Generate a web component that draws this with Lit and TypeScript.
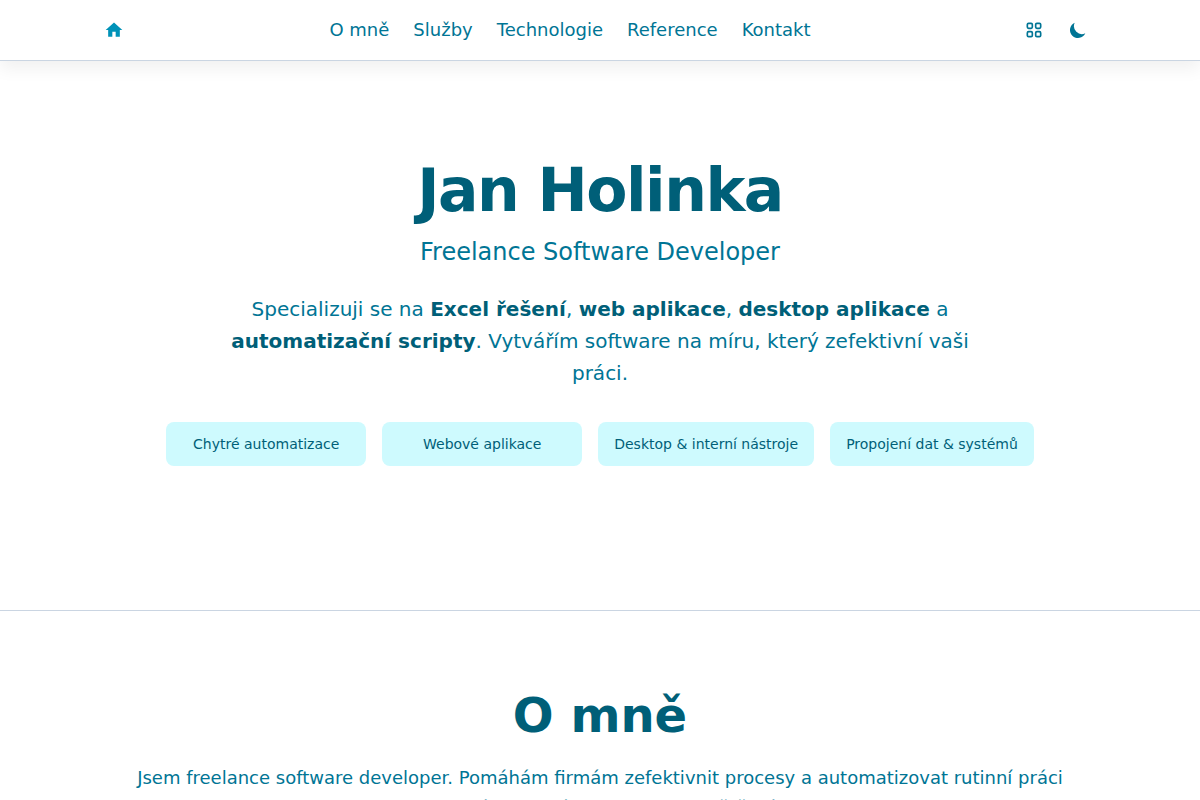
import { LitElement, html, css } from 'lit';
import { customElement } from 'lit/decorators.js';

const NAV = [
  { id: 'o-mne', label: 'O mně' },
  { id: 'sluzby', label: 'Služby' },
  { id: 'technologie', label: 'Technologie' },
  { id: 'reference', label: 'Reference' },
  { id: 'kontakt', label: 'Kontakt' },
];

const TAGS = [
  'Chytré automatizace',
  'Webové aplikace',
  'Desktop & interní nástroje',
  'Propojení dat & systémů',
];

@customElement('app-root')
export class AppRoot extends LitElement {
  static styles = css`
    :host {
      display: block;
      min-height: 100vh;
      font-family: 'DejaVu Sans', sans-serif;
      font-size: 18px;
      line-height: 28px;
      color: #007595;
      background: #fff;
    }
    * { box-sizing: border-box; }
    .header {
      position: sticky;
      top: 0;
      z-index: 1;
      background: #fff;
      border-bottom: 1px solid #cad5e2;
      box-shadow: 0 8px 16px rgba(0, 0, 0, 0.06);
    }
    .bar {
      display: flex;
      align-items: center;
      justify-content: space-between;
      max-width: 1024px;
      height: 60px;
      margin: 0 auto;
      padding: 0 16px;
    }
    .nav { display: flex; gap: 24px; }
    .link { color: inherit; text-decoration: none; }
    .actions { display: flex; gap: 8px; }
    .icon {
      display: flex;
      padding: 8px;
      border: 0;
      background: none;
      color: #007595;
      cursor: pointer;
    }
    .home { padding: 0; color: #0092b8; }
    .hero {
      display: flex;
      flex-direction: column;
      align-items: center;
      padding: 96px 16px 144px;
      text-align: center;
      border-bottom: 1px solid #cad5e2;
    }
    h1, h2, p, ul { margin: 0; }
    h1 {
      font-size: 60px;
      line-height: 66px;
      letter-spacing: -0.025em;
      color: #005f78;
    }
    .role { margin-top: 13px; font-size: 24px; line-height: 32px; }
    .lead {
      max-width: 768px;
      margin-top: 25px;
      font-size: 20px;
      line-height: 32px;
    }
    strong { color: #005f78; }
    .tags {
      display: flex;
      flex-wrap: wrap;
      justify-content: center;
      gap: 16px;
      margin-top: 33px;
      padding: 0;
      list-style: none;
    }
    .tag {
      min-width: 200px;
      padding: 12px 16px;
      border-radius: 8px;
      background: #cefafe;
      color: #005f78;
      font-size: 14px;
      line-height: 20px;
    }
    .about {
      max-width: 1024px;
      margin: 0 auto;
      padding: 80px 32px;
      text-align: center;
    }
    h2 { font-size: 48px; line-height: 48px; color: #005f78; }
    .text { margin-top: 24px; line-height: 30px; }
  `;

  render() {
    return html`
      <header class="header">
        <div class="bar">
          <a class="icon home" href="#top" aria-label="Domů">
            <svg width="20" height="20" viewBox="0 0 24 24" fill="currentColor">
              <path d="M10 20v-6h4v6h5v-8h3L12 3 2 12h3v8z" />
            </svg>
          </a>
          <nav class="nav">
            ${NAV.map((n) => html`<a class="link" href="#${n.id}">${n.label}</a>`)}
          </nav>
          <div class="actions">
            <button class="icon" type="button" aria-label="Aplikace">
              <svg width="20" height="20" viewBox="0 0 24 24" fill="none" stroke="currentColor" stroke-width="2">
                <rect x="4" y="4" width="6" height="6" rx="1.5" />
                <rect x="14" y="4" width="6" height="6" rx="1.5" />
                <rect x="4" y="14" width="6" height="6" rx="1.5" />
                <rect x="14" y="14" width="6" height="6" rx="1.5" />
              </svg>
            </button>
            <button class="icon" type="button" aria-label="Tmavý režim">
              <svg width="20" height="20" viewBox="0 0 20 20" fill="currentColor">
                <path d="M17.293 13.293A8 8 0 016.707 2.707a8.001 8.001 0 1010.586 10.586z" />
              </svg>
            </button>
          </div>
        </div>
      </header>
      <main id="top">
        <section class="hero">
          <h1>Jan Holinka</h1>
          <p class="role">Freelance Software Developer</p>
          <p class="lead">
            Specializuji se na <strong>Excel řešení</strong>, <strong>web aplikace</strong>,
            <strong>desktop aplikace</strong> a <strong>automatizační scripty</strong>. Vytvářím
            software na míru, který zefektivní vaši práci.
          </p>
          <ul class="tags">
            ${TAGS.map((t) => html`<li class="tag">${t}</li>`)}
          </ul>
        </section>
        <section class="about" id="o-mne">
          <h2>O mně</h2>
          <p class="text">
            Jsem freelance software developer. Pomáhám firmám zefektivnit procesy a automatizovat
            rutinní práci pomocí moderních softwarových řešení.
          </p>
        </section>
      </main>
    `;
  }
}
